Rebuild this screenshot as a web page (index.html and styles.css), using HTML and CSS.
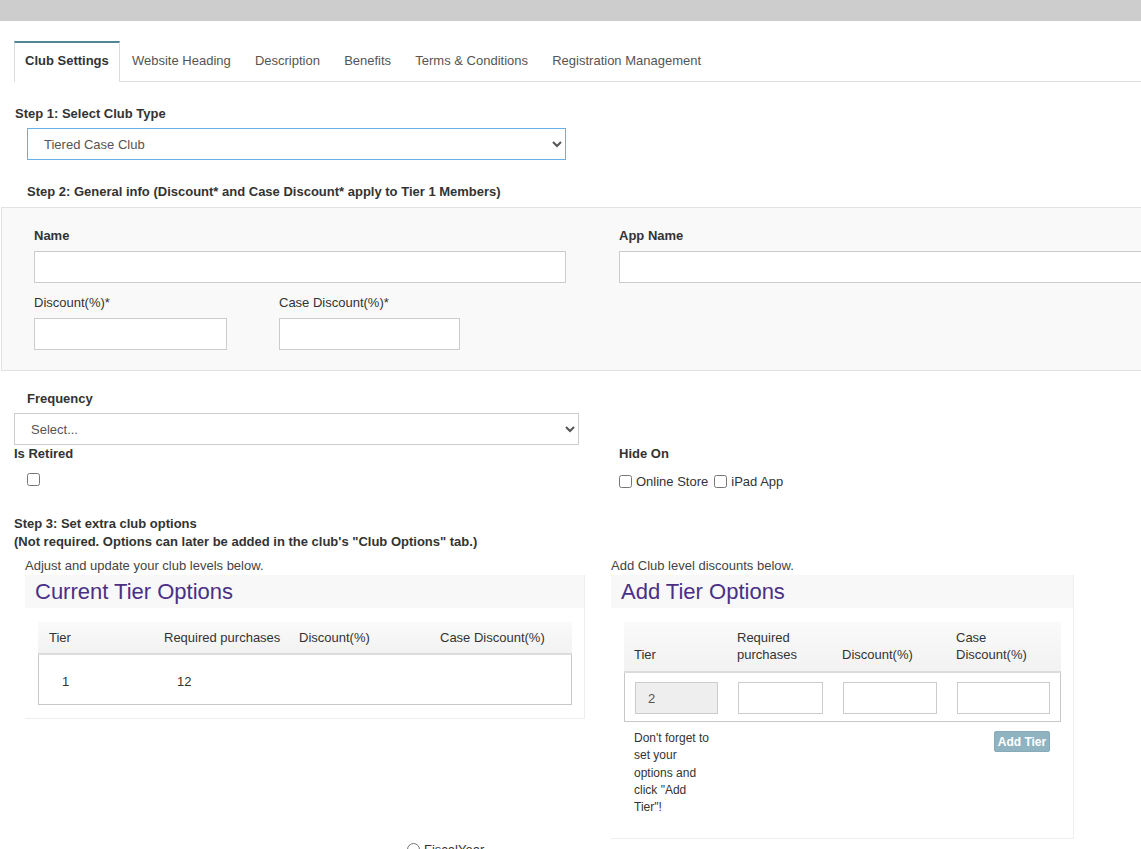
FILE: index.html
```html
<!DOCTYPE html>
<html>
<head>
<meta charset="utf-8">
<link rel="stylesheet" href="styles.css">
</head>
<body>
<div class="topbar"></div>
<div class="page">
  <ul class="tabs">
    <li class="tab active">Club Settings</li>
    <li class="tab">Website Heading</li>
    <li class="tab">Description</li>
    <li class="tab">Benefits</li>
    <li class="tab">Terms &amp; Conditions</li>
    <li class="tab">Registration Management</li>
  </ul>

  <div class="step step1">Step 1: Select Club Type</div>
  <select class="sel sel-type"><option>Tiered Case Club</option></select>

  <div class="step step2">Step 2: General info (Discount* and Case Discount* apply to Tier 1 Members)</div>
  <div class="panel">
    <div class="prow">
      <div class="pcol-name">
        <label class="lbl">Name</label>
        <input class="inp inp-name" type="text">
      </div>
      <div class="pcol-app">
        <label class="lbl">App Name</label>
        <input class="inp inp-app" type="text">
      </div>
    </div>
    <div class="prow prow2">
      <div class="pcol-disc">
        <label class="lbl lbl-n">Discount(%)*</label>
        <input class="inp inp-disc" type="text">
      </div>
      <div>
        <label class="lbl lbl-n">Case Discount(%)*</label>
        <input class="inp inp-case" type="text">
      </div>
    </div>
  </div>

  <div class="step freq">Frequency</div>
  <select class="sel sel-freq"><option>Select...</option></select>

  <div class="retired-row">
    <div class="col-retired">
      <div class="lbl">Is Retired</div>
      <input class="cb-retired" type="checkbox">
    </div>
    <div class="col-hide">
      <div class="lbl">Hide On</div>
      <div class="hide-opts">
        <label class="opt"><input type="checkbox">Online Store</label>
        <label class="opt"><input type="checkbox">iPad App</label>
      </div>
    </div>
  </div>

  <div class="step step3">Step 3: Set extra club options<br>(Not required. Options can later be added in the club's "Club Options" tab.)</div>

  <div class="tier-row">
    <div class="tier-left">
      <div class="intro">Adjust and update your club levels below.</div>
      <div class="tpanel">
        <div class="thead-title">Current Tier Options</div>
        <div class="tbody-wrap">
          <div class="cur-head">
            <div>Tier</div>
            <div>Required purchases</div>
            <div>Discount(%)</div>
            <div>Case Discount(%)</div>
          </div>
          <div class="cur-row">
            <div>1</div>
            <div>12</div>
            <div></div>
            <div></div>
          </div>
        </div>
      </div>
    </div>
    <div class="tier-right">
      <div class="intro">Add Club level discounts below.</div>
      <div class="tpanel tpanel-add">
        <div class="thead-title">Add Tier Options</div>
        <div class="tbody-wrap tbody-add">
          <div class="add-head">
            <div>Tier</div>
            <div>Required<br>purchases</div>
            <div>Discount(%)</div>
            <div>Case<br>Discount(%)</div>
          </div>
          <div class="add-row">
            <div><input class="inp tin tin-tier" type="text" value="2" disabled></div>
            <div><input class="inp tin tin-req" type="text"></div>
            <div><input class="inp tin tin-disc" type="text"></div>
            <div><input class="inp tin tin-case" type="text"></div>
          </div>
          <div class="add-foot">
            <div class="note">Don't forget to set your options and click "Add Tier"!</div>
            <button class="btn-add">Add Tier</button>
          </div>
        </div>
      </div>
    </div>
  </div>

  <div class="fiscal"><label class="opt"><input type="radio" name="fy">FiscalYear</label></div>
</div>
</body>
</html>
```

FILE: styles.css
```css
html, body {
  margin: 0;
  padding: 0;
  overflow: hidden;
  background: #fff;
}
body {
  font-family: "Liberation Sans", Arial, sans-serif;
  font-size: 13px;
  color: #333;
  width: 1141px;
  height: 849px;
}
.topbar {
  height: 21px;
  background: #cdcdcd;
}
.page {
  padding-left: 14px;
}
.tabs {
  list-style: none;
  margin: 20px 0 0 0;
  padding: 0;
  display: flex;
  border-bottom: 1px solid #dcdcdc;
  height: 40px;
}
.tab {
  padding: 0 12px 0 12.2px;
  line-height: 36px;
  color: #555;
  border-top: 2px solid transparent;
  height: 38px;
}
.tab.active {
  padding: 0 10px 0 10px;
  color: #333;
  font-weight: bold;
  border-top-color: #4f8799;
  border-left: 1px solid #dcdcdc;
  border-right: 1px solid #dcdcdc;
  background: #fff;
  height: 39px;
}
.step {
  font-weight: bold;
  line-height: 20px;
}
.step1 {
  margin-top: 22px;
  margin-left: 1px;
}
.sel {
  display: block;
  height: 32px;
  border: 1px solid #ccc;
  border-radius: 0;
  background: #fff;
  font-family: "Liberation Sans", Arial, sans-serif;
  font-size: 13px;
  color: #555;
  padding: 0 0 0 12px;
}
.sel-type {
  margin: 4px 0 0 13px;
  width: 539px;
  border-color: #66afe9;
}
.step2 {
  margin: 22px 0 0 13px;
}
.panel {
  margin: 5px 0 0 -13px;
  width: 1250px;
  background: #f9f9f9;
  border: 1px solid #e2e2e2;
  padding: 18px 0 20px 32px;
}
.prow {
  display: flex;
}
.prow2 {
  margin-top: 10px;
}
.lbl {
  display: block;
  font-weight: bold;
  line-height: 20px;
  margin-bottom: 5px;
}
.lbl-n {
  font-weight: normal;
}
.inp {
  display: block;
  box-sizing: border-box;
  height: 32px;
  border: 1px solid #ccc;
  background: #fff;
  font-family: "Liberation Sans", Arial, sans-serif;
  font-size: 13px;
  color: #555;
  padding: 0 12px;
  margin: 0;
}
.pcol-name {
  width: 585px;
}
.inp-name {
  width: 532px;
}
.inp-app {
  width: 600px;
}
.pcol-disc {
  width: 245px;
}
.inp-disc {
  width: 193px;
}
.inp-case {
  width: 181px;
}
.freq {
  margin: 18px 0 0 13px;
}
.sel-freq {
  margin-top: 4px;
  width: 565px;
  padding-left: 12px;
}
.retired-row {
  display: flex;
}
.retired-row .lbl {
  margin-bottom: 0;
  line-height: 18px;
}
.col-retired {
  width: 605px;
}
.cb-retired {
  display: block;
  margin: 10px 0 0 13px;
  width: 13px;
  height: 13px;
}
.hide-opts {
  display: flex;
  margin-top: 8px;
  height: 20px;
}
.opt {
  display: inline-flex;
  align-items: center;
  height: 20px;
  margin-right: 6px;
}
.opt input {
  margin: 0 4px 0 0;
  width: 13px;
  height: 13px;
}
.step3 {
  margin-top: 24px;
  line-height: 18px;
}
.tier-row {
  display: flex;
  margin-left: 11px;
  gap: 26px;
  margin-top: 6px;
  align-items: flex-start;
}
.tier-left {
  width: 560px;
}
.tier-right {
  width: 463px;
}
.intro {
  line-height: 18px;
  color: #444;
}
.tpanel {
  border-right: 1px solid #eee;
  border-bottom: 1px solid #eee;
}
.thead-title {
  height: 33px;
  line-height: 33px;
  background: #f8f8f8;
  font-size: 22px;
  color: #4b2f86;
  padding-left: 10px;
}
.tbody-wrap {
  padding: 14px 12px 13px 13px;
}
.cur-head, .cur-row {
  display: grid;
  grid-template-columns: 115px 135px 141px 143px;
}
.cur-head {
  height: 33px;
  line-height: 31px;
  background: linear-gradient(#fafafa, #f2f2f2);
  border-bottom: 2px solid #dcdcdc;
  box-sizing: border-box;
}
.cur-head div {
  padding-left: 11px;
}
.cur-row {
  height: 50px;
  box-sizing: border-box;
  border: 1px solid #c8c8c8;
  border-top: none;
  line-height: 54px;
}
.cur-row div {
  padding-left: 23px;
}
.tbody-add {
  padding: 14px 12px 22px 13px;
}
.add-head, .add-row {
  display: grid;
  grid-template-columns: 103px 105px 114px 114px;
}
.add-head {
  height: 51px;
  box-sizing: border-box;
  background: linear-gradient(#fafafa, #f2f2f2);
  border-bottom: 2px solid #dcdcdc;
  align-items: end;
  line-height: 17px;
  padding-bottom: 8px;
}
.add-head div {
  padding-left: 10px;
}
.add-row {
  height: 49px;
  box-sizing: border-box;
  border: 1px solid #c8c8c8;
  border-top: none;
  padding-top: 9px;
}
.add-row div {
  padding-left: 10px;
}
.tin-tier {
  width: 83px;
  background: #eee;
  padding-left: 12px;
}
.tin-req {
  width: 85px;
}
.tin-disc {
  width: 94px;
}
.tin-case {
  width: 93px;
}
.add-foot {
  display: flex;
  justify-content: space-between;
  align-items: flex-start;
  padding: 8px 11px 0 10px;
}
.note {
  width: 80px;
  font-size: 12px;
  line-height: 17.3px;
  color: #333;
}
.btn-add {
  margin-top: 1px;
  height: 21px;
  width: 56px;
  padding: 0;
  border: 1px solid #86aab8;
  border-radius: 2px;
  background: #8fb3c0;
  color: #fff;
  font-family: "Liberation Sans", Arial, sans-serif;
  font-weight: bold;
  font-size: 12px;
}
.fiscal {
  margin: 0 0 0 393px;
}
```
